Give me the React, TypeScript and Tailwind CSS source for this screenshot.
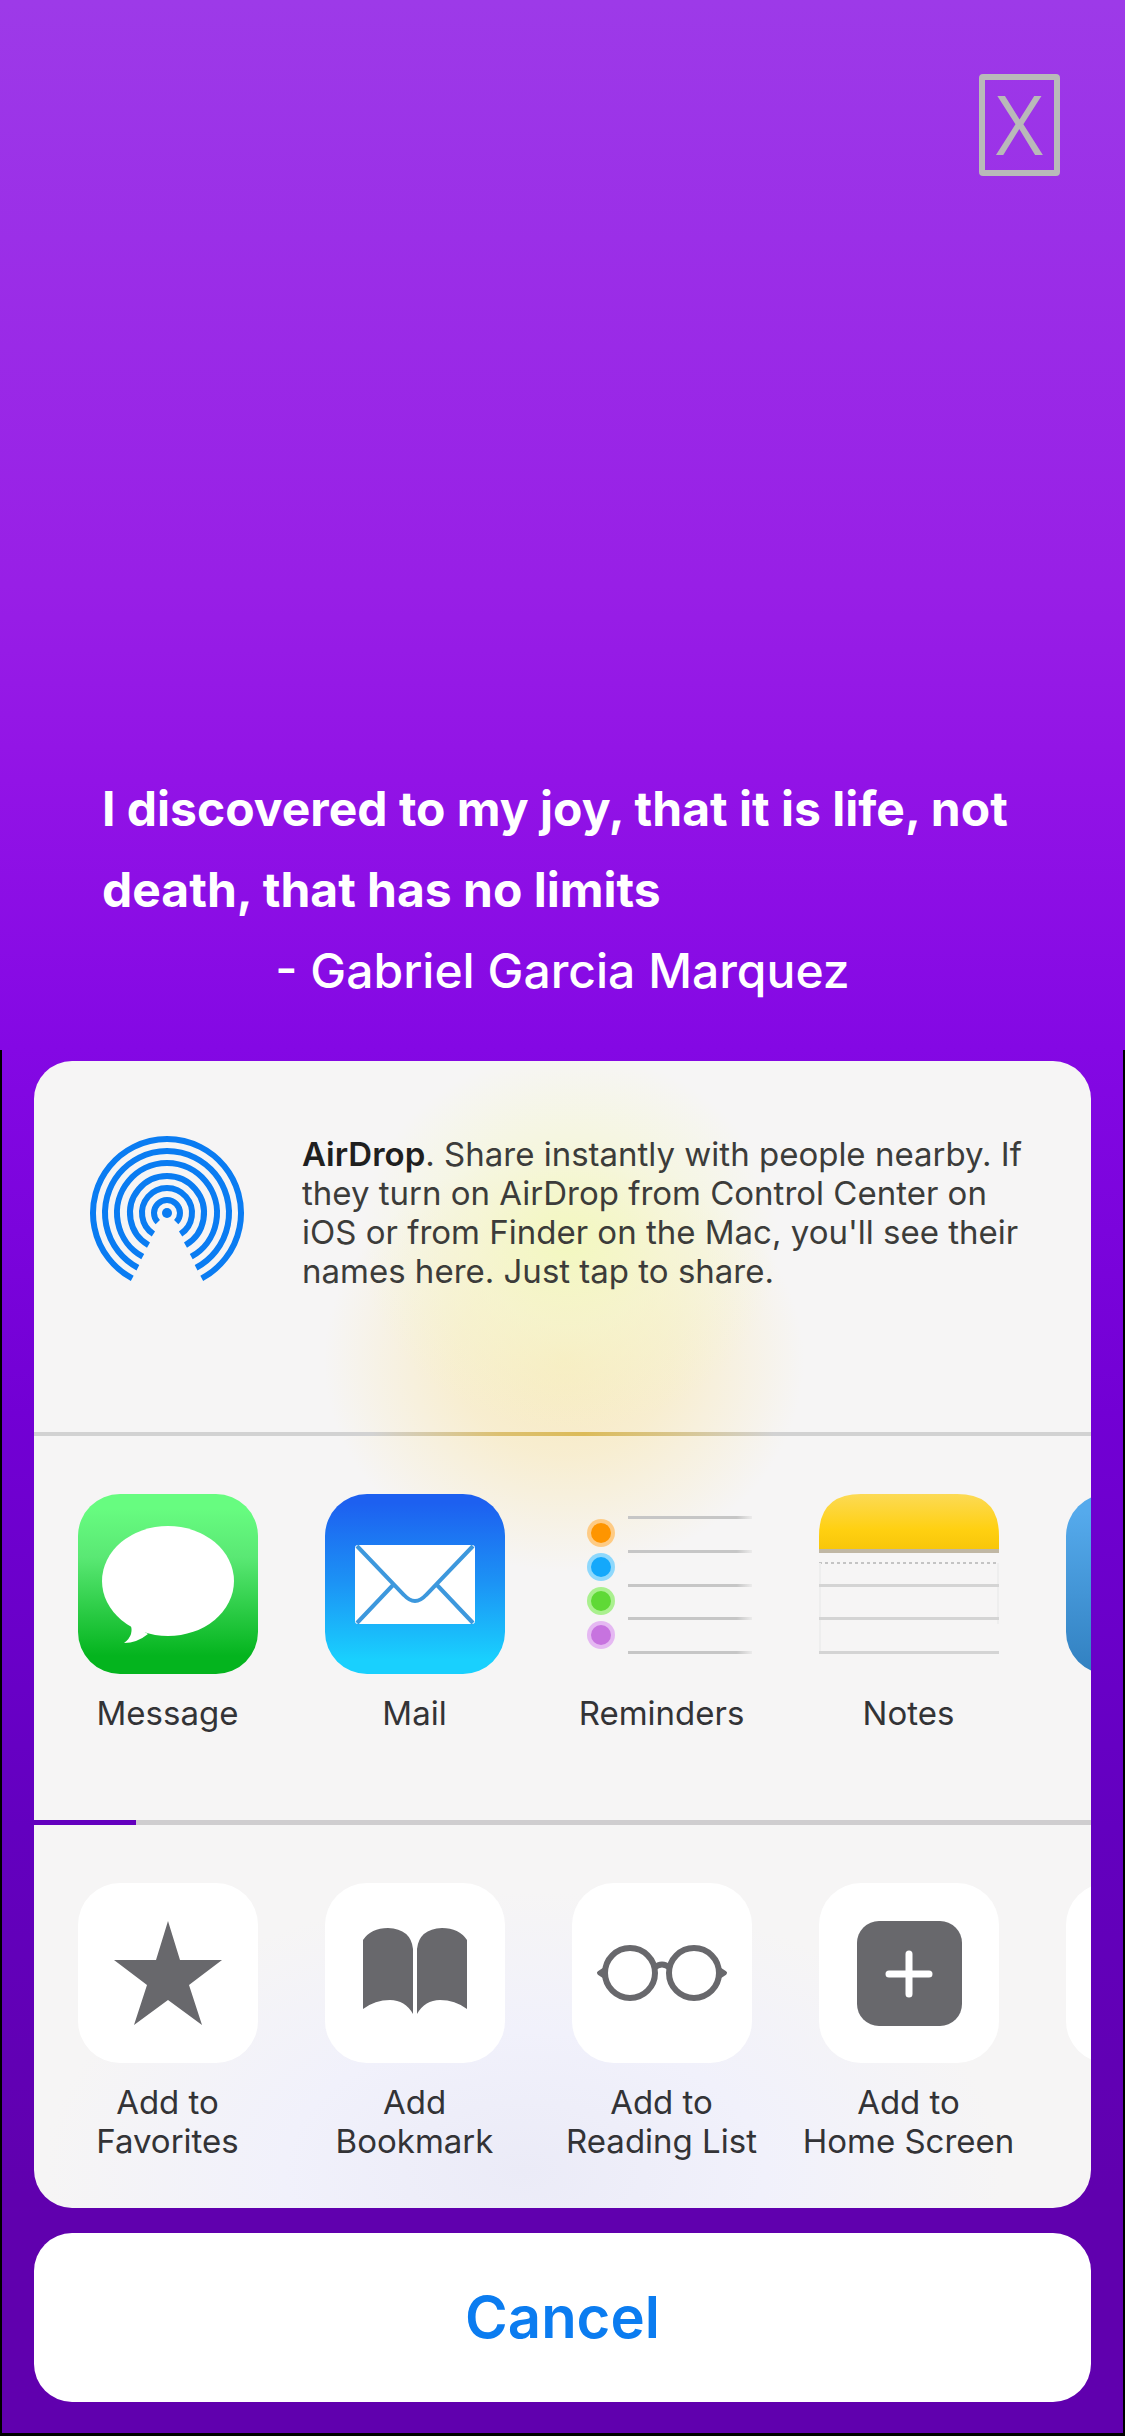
import React from "react";

const GREY = "#68686c";

function AirDropIcon() {
  const rings = [
    { r: 74, a: 28 },
    { r: 62, a: 28 },
    { r: 50, a: 29 },
    { r: 37, a: 30 },
    { r: 25, a: 33 },
    { r: 13, a: 45 },
  ];
  return (
    <svg viewBox="-78 -78 156 156" className="size-[156px] shrink-0" aria-hidden="true">
      {rings.map(({ r, a }) => {
        const x = r * Math.sin((a * Math.PI) / 180);
        const y = r * Math.cos((a * Math.PI) / 180);
        return (
          <path
            key={r}
            d={`M${-x} ${y}A${r} ${r} 0 1 1 ${x} ${y}`}
            fill="none"
            stroke="#0a7cf2"
            strokeWidth="6"
          />
        );
      })}
      <circle r="5" fill="#0a7cf2" />
    </svg>
  );
}

function MessageIcon() {
  return (
    <svg viewBox="0 0 180 180" className="size-full" aria-hidden="true">
      <defs>
        <linearGradient id="message" x1="0" y1="0" x2="0" y2="1">
          <stop offset="0.08" stopColor="#67fc80" />
          <stop offset="0.35" stopColor="#5ae874" />
          <stop offset="0.9" stopColor="#04b41e" />
        </linearGradient>
      </defs>
      <rect width="180" height="180" rx="42" fill="url(#message)" />
      <ellipse cx="90" cy="87" rx="66" ry="55" fill="#fff" />
      <path d="M52 129Q57 141 46 149Q59 149 70 140Z" fill="#fff" />
    </svg>
  );
}

function MailIcon() {
  return (
    <svg viewBox="0 0 180 180" className="size-full" aria-hidden="true">
      <defs>
        <linearGradient id="mail" x1="0" y1="0" x2="0" y2="1">
          <stop offset="0.05" stopColor="#1d60f0" />
          <stop offset="0.5" stopColor="#1c94f5" />
          <stop offset="0.92" stopColor="#19d0fe" />
        </linearGradient>
      </defs>
      <rect width="180" height="180" rx="42" fill="url(#mail)" />
      <rect x="30" y="51" width="120" height="79" rx="3" fill="#fff" />
      <path
        d="M32 52L79 101Q90 113 101 101L148 52M32 129L68 91M148 129L112 91"
        fill="none"
        stroke="#3d98dd"
        strokeWidth="4"
      />
    </svg>
  );
}

function RemindersIcon() {
  const dots = [
    ["#fe9500", "#fecb84"],
    ["#14a8fb", "#8ed8fc"],
    ["#5fd936", "#aaf08f"],
    ["#c773df", "#e5b8f2"],
  ];
  return (
    <svg viewBox="0 0 180 180" className="size-full" aria-hidden="true">
      <defs>
        <linearGradient id="rule" gradientUnits="userSpaceOnUse" x1="56" y1="0" x2="184" y2="0">
          <stop offset="0.85" stopColor="#c6c6c6" />
          <stop offset="1" stopColor="#c6c6c6" stopOpacity="0" />
        </linearGradient>
      </defs>
      {dots.map(([inner, outer], i) => (
        <g key={inner}>
          <circle cx="29" cy={39 + i * 34} r="14" fill={outer} />
          <circle cx="29" cy={39 + i * 34} r="10" fill={inner} />
        </g>
      ))}
      {[22, 56, 90, 123, 157].map((y) => (
        <rect key={y} x="56" y={y} width="124" height="3" fill="url(#rule)" />
      ))}
    </svg>
  );
}

function NotesIcon() {
  return (
    <svg viewBox="0 0 180 180" className="size-full" aria-hidden="true">
      <defs>
        <linearGradient id="notes" x1="0" y1="0" x2="0" y2="1">
          <stop offset="0" stopColor="#fcda55" />
          <stop offset="0.65" stopColor="#ffd011" />
          <stop offset="1" stopColor="#f8c60a" />
        </linearGradient>
      </defs>
      <path d="M0 55V42Q0 0 42 0H138Q180 0 180 42V55Z" fill="url(#notes)" />
      <rect y="55" width="180" height="4" fill="#c0b7a4" />
      <path d="M0 69H180" stroke="#c4c4c4" strokeWidth="2" strokeDasharray="3 3" />
      <path d="M1 69V160M179 69V130" stroke="#eeeeee" strokeWidth="2" />
      {[90, 123, 157].map((y) => (
        <rect key={y} y={y} width="180" height="3" fill="#d4d4d4" />
      ))}
    </svg>
  );
}

function BlueAppIcon() {
  return (
    <svg viewBox="0 0 180 180" className="size-full" aria-hidden="true">
      <defs>
        <linearGradient id="blueapp" x1="0" y1="0" x2="0" y2="1">
          <stop offset="0.1" stopColor="#55aaec" />
          <stop offset="1" stopColor="#3180c0" />
        </linearGradient>
      </defs>
      <rect width="180" height="180" rx="42" fill="url(#blueapp)" />
    </svg>
  );
}

function StarIcon() {
  return (
    <svg viewBox="0 0 180 180" className="size-full" aria-hidden="true">
      <path
        d="M90 38L102 77H144L111 102L124 142L90 117L56 142L69 102L36 77H78Z"
        fill={GREY}
      />
    </svg>
  );
}

function BookIcon() {
  return (
    <svg viewBox="0 0 180 180" className="size-full" aria-hidden="true">
      <path
        d="M38 57Q46 45 63 45Q86 46 88 66V131Q80 117 65 117Q50 117 38 126ZM142 57Q134 45 117 45Q94 46 92 66V131Q100 117 115 117Q130 117 142 126Z"
        fill={GREY}
      />
    </svg>
  );
}

function GlassesIcon() {
  return (
    <svg viewBox="0 0 180 180" className="size-full" aria-hidden="true">
      <g fill="none" stroke={GREY} strokeWidth="6">
        <circle cx="58" cy="90" r="25" />
        <circle cx="122" cy="90" r="25" />
        <path d="M82 85Q90 78 98 85" />
      </g>
      <path
        d="M33 86L27 90L33 94ZM147 86L153 90L147 94Z"
        fill={GREY}
        stroke={GREY}
        strokeWidth="4"
        strokeLinejoin="round"
      />
    </svg>
  );
}

function PlusIcon() {
  return (
    <svg viewBox="0 0 180 180" className="size-full" aria-hidden="true">
      <rect x="38" y="38" width="105" height="105" rx="22" fill={GREY} />
      <path d="M90 71V111M70 91H110" stroke="#fff" strokeWidth="7" strokeLinecap="round" />
    </svg>
  );
}

type Item = { lines: string[]; icon: React.ReactNode };

const apps: Item[] = [
  { lines: ["Message"], icon: <MessageIcon /> },
  { lines: ["Mail"], icon: <MailIcon /> },
  { lines: ["Reminders"], icon: <RemindersIcon /> },
  { lines: ["Notes"], icon: <NotesIcon /> },
];

const actions: Item[] = [
  { lines: ["Add to", "Favorites"], icon: <StarIcon /> },
  { lines: ["Add", "Bookmark"], icon: <BookIcon /> },
  { lines: ["Add to", "Reading List"], icon: <GlassesIcon /> },
  { lines: ["Add to", "Home Screen"], icon: <PlusIcon /> },
];

function ShareRow({ items, tile, next }: { items: Item[]; tile: string; next: React.ReactNode }) {
  return (
    <div className="flex overflow-hidden pt-[58px] pl-[10px]">
      {items.map(({ lines, icon }) => (
        <button
          key={lines.join(" ")}
          type="button"
          className="flex w-[247px] shrink-0 flex-col items-center text-[33px] leading-[39px] text-[#333336]"
        >
          <span className={`mb-5 block size-[180px] rounded-[42px] ${tile}`}>{icon}</span>
          {lines.map((line) => (
            <span key={line} className="block whitespace-nowrap">
              {line}
            </span>
          ))}
        </button>
      ))}
      <button type="button" aria-label="More" className="flex w-[247px] shrink-0 flex-col items-center">
        <span className={`block size-[180px] rounded-[42px] ${tile}`}>{next}</span>
      </button>
    </div>
  );
}

export default function App() {
  return (
    <main className="flex min-h-screen flex-col justify-between bg-[linear-gradient(180deg,#9d3ae8_0%,#981fe6_24%,#9213e6_32%,#8408e4_43%,#7200d4_58%,#6300bf_75%,#6000ae_90%)] font-[Inter,sans-serif]">
      <header className="flex justify-end pt-[74px] pr-[65px]">
        <button
          type="button"
          aria-label="Close"
          className="flex h-[102px] w-[81px] items-center justify-center rounded-sm border-6 border-[#b9b9b9] pb-1 font-['Open_Sans',sans-serif] text-[82px] leading-none font-normal text-[#b9b9b9]"
        >
          X
        </button>
      </header>

      <div>
        <figure className="px-[102px] pb-[39px] text-[48px] leading-[81px] text-white">
          <blockquote className="font-bold">
            <span className="block whitespace-nowrap">I discovered to my joy, that it is life, not</span>
            <span className="block whitespace-nowrap">death, that has no limits</span>
          </blockquote>
          <figcaption className="text-center font-medium">- Gabriel Garcia Marquez</figcaption>
        </figure>

        <section className="border-x-2 border-b-3 border-black px-[32px] pt-[11px] pb-[31px]" aria-label="Share">
          <div className="overflow-hidden rounded-[38px] bg-[#f6f5f5] bg-[radial-gradient(210px_190px_at_535px_180px,#f3f8c0_0%,#f5f7cda0_45%,#f6f6f600_100%),radial-gradient(240px_210px_at_530px_300px,#f8e9be_0%,#f8ebc4c0_45%,#f6f6f600_100%),radial-gradient(480px_280px_at_490px_1110px,#ebebf7_0%,#f1f1fb_50%,#f5f5f500_100%)]">
            <div className="flex h-[371px] items-start gap-[57px] pt-[74px] pl-[55px]">
              <AirDropIcon />
              <p className="text-[33px] leading-[39px] text-[#3c3c3a]">
                <span className="block whitespace-nowrap">
                  <strong className="font-semibold text-[#1f1f1f]">AirDrop</strong>. Share instantly with people nearby. If
                </span>
                <span className="block whitespace-nowrap">they turn on AirDrop from Control Center on</span>
                <span className="block whitespace-nowrap">iOS or from Finder on the Mac, you'll see their</span>
                <span className="block whitespace-nowrap">names here. Just tap to share.</span>
              </p>
            </div>
            <div className="h-1 bg-[linear-gradient(90deg,#d2d2d2_32%,#dcc070_44%,#dcbb58_52%,#d8c488_60%,#d2d2d2_70%)]" />
            <div className="h-[384px]">
              <ShareRow items={apps} tile="" next={<BlueAppIcon />} />
            </div>
            <div className="h-[5px] bg-[linear-gradient(90deg,#6400be_102px,#cfcdcf_102px)]" />
            <div className="h-[383px]">
              <ShareRow items={actions} tile="bg-white" next={null} />
            </div>
          </div>
          <button
            type="button"
            className="mt-[25px] flex h-[169px] w-full items-center justify-center rounded-[38px] bg-white text-[58px] font-semibold text-[#0b7cf0]"
          >
            Cancel
          </button>
        </section>
      </div>
    </main>
  );
}
